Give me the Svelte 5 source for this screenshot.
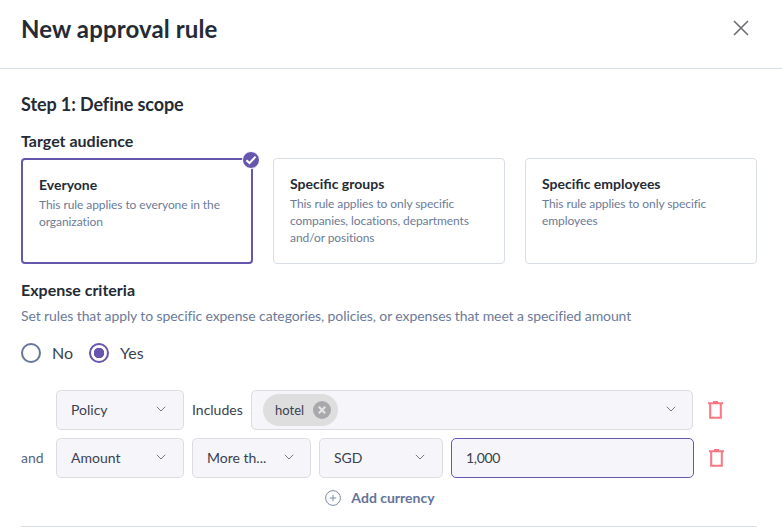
<script>
	const audiences = [
		{ title: 'Everyone', text: 'This rule applies to everyone in the organization', selected: true },
		{ title: 'Specific groups', text: 'This rule applies to only specific companies, locations, departments and/or positions', selected: false },
		{ title: 'Specific employees', text: 'This rule applies to only specific employees', selected: false }
	];
</script>

{#snippet chevron()}
	<svg class="chevron" width="10" height="6" viewBox="0 0 10 6"><path d="M.8.8 5 5 9.2.8" fill="none" stroke="#77777c" stroke-width="1" /></svg>
{/snippet}

{#snippet trash()}
	<svg class="trash" width="15" height="18" viewBox="0 0 15 18">
		<path d="M0 2.2h15M5 .8h5M2.2 3v13.8h10.6V3" fill="none" stroke="#fb7680" stroke-width="2" />
	</svg>
{/snippet}

<div class="page">
	<header class="header">
		<h1>New approval rule</h1>
		<svg class="close" width="16" height="16" viewBox="0 0 16 16"><path d="M1 1l14 14M15 1 1 15" stroke="#6f6f73" stroke-width="1.6" fill="none" /></svg>
	</header>

	<main class="body">
		<h2>Step 1: Define scope</h2>
		<h3 class="audience-title">Target audience</h3>

		<div class="cards">
			{#each audiences as a}
				<div class="card" class:selected={a.selected}>
					{#if a.selected}
						<span class="badge">
							<svg width="12" height="10" viewBox="0 0 12 10"><path d="M1.4 5.2 4.5 8 10.6 1.6" fill="none" stroke="#fff" stroke-width="2" /></svg>
						</span>
					{/if}
					<div class="card-title">{a.title}</div>
					<p>{a.text}</p>
				</div>
			{/each}
		</div>

		<h3 class="criteria-title">Expense criteria</h3>
		<p class="hint">Set rules that apply to specific expense categories, policies, or expenses that meet a specified amount</p>

		<div class="radios">
			<span class="radio"></span><span class="radio-label no">No</span>
			<span class="radio on"></span><span class="radio-label">Yes</span>
		</div>

		<div class="row first">
			<div class="select policy"><span>Policy</span>{@render chevron()}</div>
			<span class="includes">Includes</span>
			<div class="select wide">
				<span class="chip">hotel
					<svg width="18" height="18" viewBox="0 0 18 18"><circle cx="9" cy="9" r="9" fill="#a9a9ad" /><path d="M5.8 5.8l6.4 6.4M12.2 5.8l-6.4 6.4" stroke="#e6e6e6" stroke-width="2" /></svg>
				</span>
				{@render chevron()}
			</div>
			{@render trash()}
		</div>

		<div class="row second">
			<span class="and">and</span>
			<div class="select policy"><span>Amount</span>{@render chevron()}</div>
			<div class="select more"><span>More th...</span>{@render chevron()}</div>
			<div class="select currency"><span>SGD</span>{@render chevron()}</div>
			<div class="select value"><span>1,000</span></div>
			{@render trash()}
		</div>

		<div class="add">
			<svg width="16" height="16" viewBox="0 0 16 16"><circle cx="8" cy="8" r="7.4" fill="none" stroke="#7d8ba6" /><path d="M8 4.8v6.4M4.8 8h6.4" stroke="#7d8ba6" /></svg>
			<span>Add currency</span>
		</div>

		<div class="divider"></div>
	</main>
</div>

<style>
	:global(body) {
		margin: 0;
		background: #fff;
	}

	.page {
		width: 782px;
		height: 530px;
		overflow: hidden;
		font-family: Lato, sans-serif;
		color: #252b35;
	}

	.header {
		height: 69px;
		box-sizing: border-box;
		border-bottom: 1px solid #d9e0ea;
		padding: 0 33px 0 21px;
		display: flex;
		align-items: flex-start;
		justify-content: space-between;
	}

	h1 {
		margin: -1px 0 0;
		font-size: 24px;
		font-weight: 700;
		line-height: 60px;
		letter-spacing: 0.12px;
	}

	.close {
		margin-top: 20px;
	}

	.body {
		padding: 24px 25px 0 21px;
	}

	h2 {
		margin: 0;
		font-size: 18px;
		font-weight: 700;
		line-height: 22px;
		letter-spacing: -0.1px;
	}

	h3 {
		margin: 0;
		font-size: 16px;
		font-weight: 700;
		line-height: 20px;
	}

	.audience-title {
		margin-top: 16px;
	}

	.cards {
		display: grid;
		grid-template-columns: repeat(3, 232px);
		gap: 20px;
		margin-top: 7px;
	}

	.card {
		position: relative;
		height: 106px;
		box-sizing: border-box;
		border: 1px solid #d9dde5;
		border-radius: 4px;
		padding: 16px 16px 0;
	}

	.card.selected {
		border: 2px solid #6756ae;
	}

	.badge {
		position: absolute;
		top: -9px;
		right: -9px;
		width: 16px;
		height: 16px;
		border-radius: 50%;
		background: #6756ae;
		border: 1px solid #fff;
		display: flex;
		align-items: center;
		justify-content: center;
	}

	.card-title {
		font-size: 14px;
		font-weight: 700;
		line-height: 17px;
	}

	.card p {
		margin: 3px 0 0;
		font-size: 12px;
		line-height: 17px;
		color: #6c7b98;
		letter-spacing: -0.08px;
	}

	.criteria-title {
		margin-top: 16px;
	}

	.hint {
		margin: 6px 0 0;
		font-size: 14px;
		line-height: 20px;
		color: #6c7b98;
		letter-spacing: -0.1px;
	}

	.radios {
		display: flex;
		align-items: center;
		margin-top: 17px;
		height: 20px;
	}

	.radio {
		width: 20px;
		height: 20px;
		box-sizing: border-box;
		border: 2px solid #64779a;
		border-radius: 50%;
	}

	.radio.on {
		border-color: #6756ae;
		background: radial-gradient(circle, #6756ae 0 5px, #fff 5.5px);
	}

	.radio-label {
		margin-left: 11px;
		padding-bottom: 2px;
		font-size: 16px;
		color: #3a4150;
	}

	.radio-label.no {
		margin-right: 16px;
	}

	.row {
		display: flex;
		align-items: center;
		gap: 8px;
		height: 40px;
	}

	.row.first {
		margin-top: 27px;
		padding-left: 35px;
	}

	.row.second {
		margin-top: 8px;
	}

	.and {
		width: 27px;
		padding-bottom: 2px;
		font-size: 14px;
		color: #556480;
	}

	.select {
		height: 40px;
		box-sizing: border-box;
		background: #f5f5fa;
		border: 1px solid #dcdce2;
		border-radius: 5px;
		padding: 0 14px 2px;
		display: flex;
		align-items: center;
		justify-content: space-between;
		font-size: 14px;
		color: #3a4150;
	}

	.policy {
		width: 128px;
		padding-right: 17px;
	}

	.more {
		width: 119px;
		padding-right: 16px;
	}

	.currency {
		width: 124px;
		padding-right: 17px;
	}

	.value {
		width: 243px;
		border-color: #6756ae;
		letter-spacing: -0.3px;
	}

	.wide {
		width: 442px;
		padding: 0 16px 0 11px;
	}

	.wide .chevron {
		margin-bottom: 2px;
	}

	.includes {
		width: 51px;
		padding-bottom: 2px;
		font-size: 14px;
		color: #3a4150;
	}

	.chip {
		height: 32px;
		box-sizing: border-box;
		display: flex;
		align-items: center;
		gap: 9px;
		padding: 0 7px 1px 12px;
		border-radius: 16px;
		background: #dedede;
		font-size: 13px;
	}

	.chip svg {
		margin-top: 1px;
	}

	.chevron {
		flex: none;
	}

	.trash {
		margin-left: 7px;
		flex: none;
	}

	.add {
		display: flex;
		align-items: center;
		justify-content: center;
		gap: 10px;
		margin: 10px 0 0;
		width: 718px;
		font-size: 14px;
		font-weight: 700;
		line-height: 20px;
		color: #64749a;
	}

	.divider {
		height: 1px;
		background: #d9dde5;
		margin-top: 18px;
		width: 736px;
	}
</style>
